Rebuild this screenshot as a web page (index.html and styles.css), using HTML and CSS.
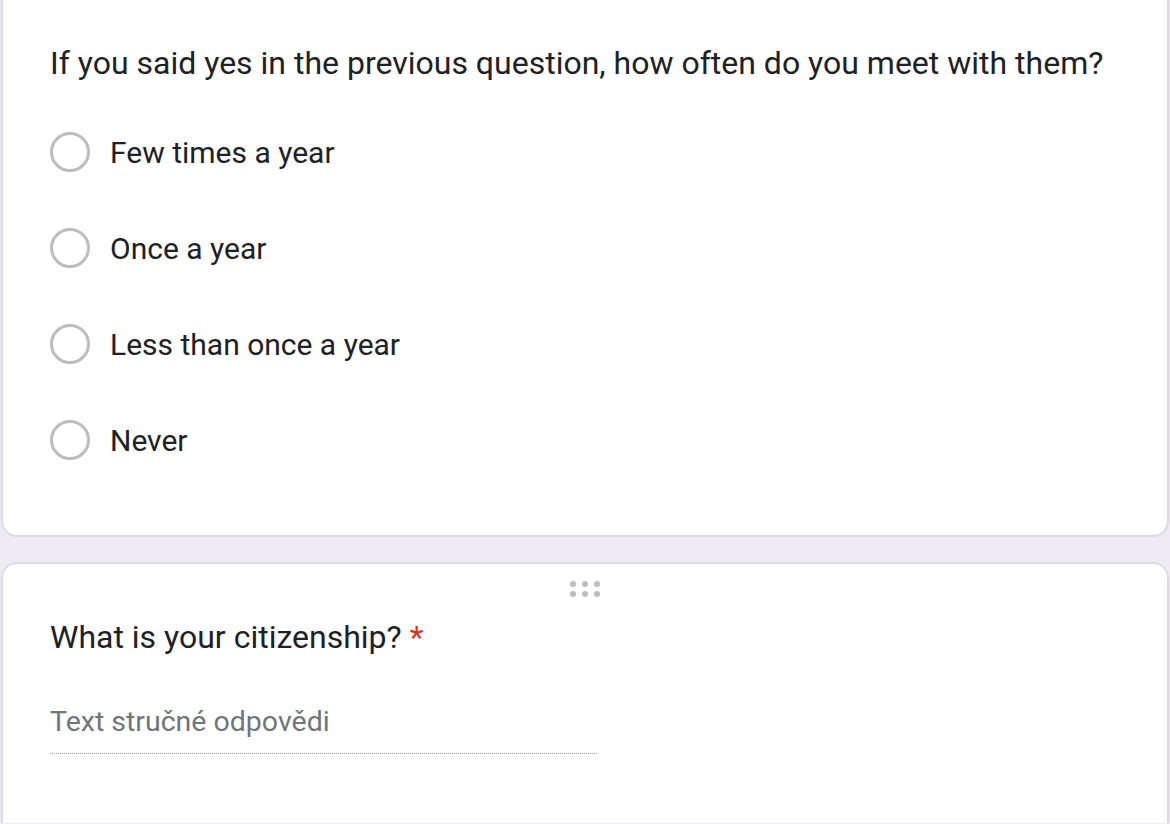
FILE: index.html
```html
<!DOCTYPE html>
<html>
<head>
<meta charset="utf-8">
<link rel="stylesheet" href="styles.css">
</head>
<body>
<div class="card card-top">
  <div class="q-title">If you said yes in the previous question, how often do you meet with them?</div>
  <div class="options">
    <div class="option"><span class="radio"></span><span class="opt-label">Few times a year</span></div>
    <div class="option"><span class="radio"></span><span class="opt-label">Once a year</span></div>
    <div class="option"><span class="radio"></span><span class="opt-label">Less than once a year</span></div>
    <div class="option"><span class="radio"></span><span class="opt-label">Never</span></div>
  </div>
</div>
<div class="card card-bottom">
  <div class="drag">
    <span></span><span></span><span></span><span></span><span></span><span></span>
  </div>
  <div class="q-title q2">What is your citizenship? <span class="req">*</span></div>
  <div class="answer">
    <div class="placeholder">Text stručné odpovědi</div>
  </div>
</div>
</body>
</html>
```
FILE: styles.css
```css
html, body {
  margin: 0;
  padding: 0;
}
body {
  background: #eeebf6;
  font-family: Roboto, "Noto Sans", sans-serif;
  color: #202124;
  width: 1170px;
  height: 824px;
  overflow: hidden;
}
.card {
  background: #fff;
  border: 2px solid #dadce0;
  margin: 0 1px;
  padding-left: 47px;
}
.card-top {
  border-top: none;
  border-radius: 0 0 16px 16px;
  padding-top: 45px;
  padding-bottom: 47px;
}
.card-bottom {
  border-bottom: none;
  border-radius: 16px 16px 0 0;
  margin-top: 25px;
  height: 259px;
}
.q-title {
  font-size: 32px;
  line-height: 36px;
  letter-spacing: 0;
}
.options {
  margin-top: 23px;
}
.option {
  height: 96px;
  display: flex;
  align-items: center;
}
.radio {
  width: 40px;
  height: 40px;
  box-sizing: border-box;
  border: 3.5px solid #bdbdbd;
  border-radius: 50%;
  flex: none;
}
.opt-label {
  margin-left: 20px;
  font-size: 30px;
}
.drag {
  display: grid;
  grid-template-columns: repeat(3, 6px);
  column-gap: 6px;
  row-gap: 4px;
  justify-content: center;
  margin-left: -47px;
  padding-top: 17px;
}
.drag span {
  width: 6px;
  height: 6px;
  border-radius: 50%;
  background: #bdbdbd;
}
.q2 {
  margin-top: 22px;
}
.req {
  color: #d93025;
}
.answer {
  margin-top: 51px;
  width: 547px;
  border-bottom: 1px dotted #9aa0a6;
  padding-bottom: 15px;
}
.placeholder {
  font-size: 28.5px;
  line-height: 32px;
  color: #70757a;
}
```
